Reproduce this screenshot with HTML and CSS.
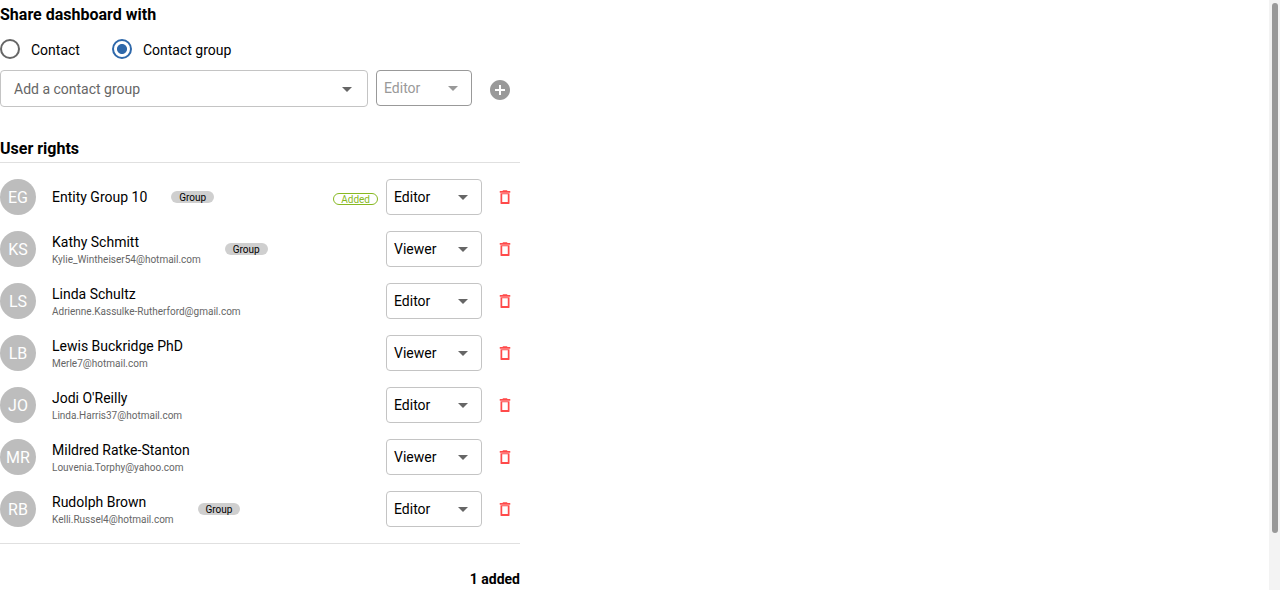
FILE: index.html
```html
<!DOCTYPE html>
<html lang="en">
<head>
<meta charset="utf-8">
<title>Share dashboard</title>
<link rel="stylesheet" href="styles.css">
</head>
<body>
<svg class="defs" aria-hidden="true">
  <symbol id="caret" viewBox="0 0 24 24"><path d="M7 10l5 5 5-5z"/></symbol>
  <symbol id="trash" viewBox="0 0 24 24"><path d="M6 20.600q0 .6.6.6h10.800q.6 0 .6-.6V7H6v13.600zM8.300 8.200h7.400v10.600H8.300V8.200zM15.500 4l-1-1h-5l-1 1H5v2.300h14V4z"/></symbol>
</svg>
<main class="page">
  <section class="panel">
    <h2 class="title">Share dashboard with</h2>
    <div class="radios">
      <label class="radio"><span class="ring"></span><span>Contact</span></label>
      <label class="radio"><span class="ring checked"></span><span>Contact group</span></label>
    </div>
    <div class="add-form">
      <div class="combo"><span>Add a contact group</span><svg class="caret"><use href="#caret"/></svg></div>
      <div class="select disabled"><span>Editor</span><svg class="caret"><use href="#caret"/></svg></div>
      <svg class="add" viewBox="0 0 24 24"><path d="M12 2C6.480 2 2 6.480 2 12s4.480 10 10 10 10-4.480 10-10S17.520 2 12 2zm5 11h-4v4h-2v-4H7v-2h4V7h2v4h4v2z"/></svg>
    </div>
    <h2 class="title rights">User rights</h2>
    <ul class="list">
      <li class="row"><span class="avatar">EG</span><div class="who"><p class="name">Entity Group 10</p></div><span class="chip">Group</span><span class="added">Added</span><div class="select"><span>Editor</span><svg class="caret"><use href="#caret"/></svg></div><svg class="trash"><use href="#trash"/></svg></li>
      <li class="row"><span class="avatar">KS</span><div class="who"><p class="name">Kathy Schmitt</p><p class="mail">Kylie_Wintheiser54@hotmail.com</p></div><span class="chip">Group</span><div class="select"><span>Viewer</span><svg class="caret"><use href="#caret"/></svg></div><svg class="trash"><use href="#trash"/></svg></li>
      <li class="row"><span class="avatar">LS</span><div class="who"><p class="name">Linda Schultz</p><p class="mail">Adrienne.Kassulke-Rutherford@gmail.com</p></div><div class="select"><span>Editor</span><svg class="caret"><use href="#caret"/></svg></div><svg class="trash"><use href="#trash"/></svg></li>
      <li class="row"><span class="avatar">LB</span><div class="who"><p class="name">Lewis Buckridge PhD</p><p class="mail">Merle7@hotmail.com</p></div><div class="select"><span>Viewer</span><svg class="caret"><use href="#caret"/></svg></div><svg class="trash"><use href="#trash"/></svg></li>
      <li class="row"><span class="avatar">JO</span><div class="who"><p class="name">Jodi O'Reilly</p><p class="mail">Linda.Harris37@hotmail.com</p></div><div class="select"><span>Editor</span><svg class="caret"><use href="#caret"/></svg></div><svg class="trash"><use href="#trash"/></svg></li>
      <li class="row"><span class="avatar">MR</span><div class="who"><p class="name">Mildred Ratke-Stanton</p><p class="mail">Louvenia.Torphy@yahoo.com</p></div><div class="select"><span>Viewer</span><svg class="caret"><use href="#caret"/></svg></div><svg class="trash"><use href="#trash"/></svg></li>
      <li class="row"><span class="avatar">RB</span><div class="who"><p class="name">Rudolph Brown</p><p class="mail">Kelli.Russel4@hotmail.com</p></div><span class="chip">Group</span><div class="select"><span>Editor</span><svg class="caret"><use href="#caret"/></svg></div><svg class="trash"><use href="#trash"/></svg></li>
    </ul>
    <p class="summary">1 added</p>
  </section>
  <div class="track"><div class="thumb"></div></div>
</main>
</body>
</html>
```
FILE: styles.css
```css
* { box-sizing: border-box; }
body { margin: 0; background: #fff; color: #000; font: 400 14px/20px Roboto, sans-serif; }
h2, p, ul { margin: 0; padding: 0; }
.defs { display: none; }
.page { display: flex; justify-content: space-between; height: 590px; overflow: hidden; }
.panel { width: 520px; }
.title { height: 28px; padding-top: 1px; font-size: 16px; font-weight: 700; line-height: 28px; }
.radios { display: flex; gap: 32px; height: 42px; align-items: center; }
.radio { display: flex; align-items: center; gap: 11px; }
.radio span:last-child { padding-top: 2px; }
.ring { width: 20px; height: 20px; border: 2px solid #666; border-radius: 50%; }
.ring.checked { border-color: #2e68aa; background: radial-gradient(circle, #2e68aa 4.600px, transparent 5.400px); }
.add-form { display: flex; align-items: flex-start; }
.combo { display: flex; align-items: center; justify-content: space-between; width: 368px; height: 37px; margin-right: 8px; padding: 0 8px 0 13px; border: 1px solid #c4c4c4; border-radius: 4px; color: #666; }
.select { display: flex; flex: none; align-items: center; justify-content: space-between; width: 96px; height: 36px; padding: 0 6px 0 7px; border: 1px solid #c4c4c4; border-radius: 4px; }
.disabled { border-color: #999; color: #999; }
.caret { width: 24px; height: 24px; fill: #666; }
.disabled .caret { fill: #999; }
.add { width: 24px; height: 24px; margin: 8px 0 0 16px; fill: #999; }
.rights { margin-top: 27px; }
.list { list-style: none; padding: 8px 0; border: solid #e0e0e0; border-width: 1px 0; }
.row { display: flex; align-items: center; height: 52px; }
.avatar { display: flex; flex: none; align-items: center; justify-content: center; width: 36px; height: 36px; margin-right: 16px; padding-top: 1px; border-radius: 50%; background: #bdbdbd; color: #fff; font-size: 16px; }
.name { line-height: 20px; }
.mail { color: #666; font-size: 10px; line-height: 15px; }
.chip { height: 12px; margin-left: 24px; padding: 0 7.900px; border-radius: 6px; background: #cfcfcf; font-size: 10px; line-height: 13px; }
.row .select { margin-left: auto; }
.added { height: 12px; margin: 4px 8px 0 auto; padding: 0 7px; border: 1px solid #88b922; border-radius: 6px; color: #88b922; font-size: 10px; line-height: 12px; }
.added + .select { margin-left: 0; }
.trash { flex: none; width: 18px; height: 18px; margin: 0 6px 0 14px; fill: #ff4a4a; }
.summary { padding-top: 25px; font-weight: 700; text-align: right; }
.track { width: 11px; padding: 3px 2px 0 3px; background: #f3f3f3; }
.thumb { height: 530px; border-radius: 3px; background: #999; }
```
